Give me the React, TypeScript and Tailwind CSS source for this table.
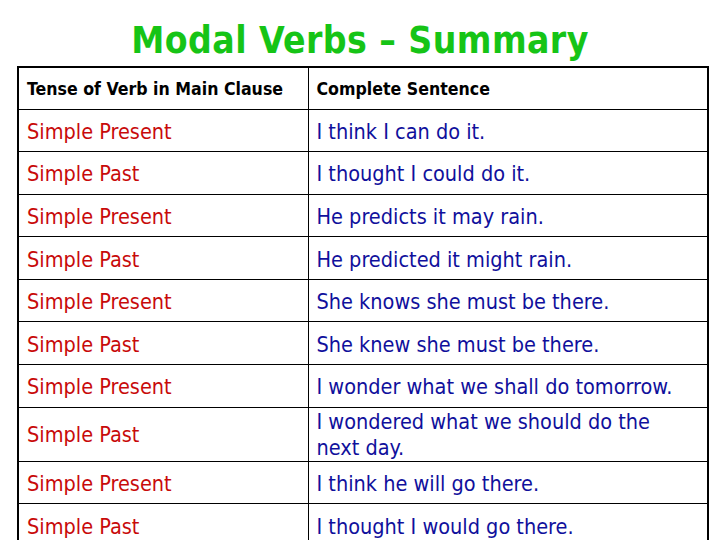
const rows: [string, string][] = [
  ["Simple Present", "I think I can do it."],
  ["Simple Past", "I thought I could do it."],
  ["Simple Present", "He predicts it may rain."],
  ["Simple Past", "He predicted it might rain."],
  ["Simple Present", "She knows she must be there."],
  ["Simple Past", "She knew she must be there."],
  ["Simple Present", "I wonder what we shall do tomorrow."],
  ["Simple Past", "I wondered what we should do the next day."],
  ["Simple Present", "I think he will go there."],
  ["Simple Past", "I thought I would go there."],
];

export default function App() {
  return (
    <div
      className="w-[720px] h-[540px] overflow-hidden bg-white"
      style={{ fontFamily: '"DejaVu Sans Condensed", "DejaVu Sans", sans-serif' }}
    >
      <h1 className="h-[66px] pt-[20px] text-center text-[37px] leading-[42px] font-bold tracking-[0.4px] text-[#16c416]">
        Modal Verbs – Summary
      </h1>
      <table className="ml-[17px] w-[692px] border-collapse border-2 border-black table-fixed">
        <colgroup>
          <col className="w-[290px]" />
          <col />
        </colgroup>
        <thead>
          <tr className="h-[42px]">
            <th className="border border-black pl-[8px] pt-[2px] text-left text-[17.6px] font-bold text-black">
              Tense of Verb in Main Clause
            </th>
            <th className="border border-black pl-[8px] pt-[2px] text-left text-[17.6px] font-bold text-black">
              Complete Sentence
            </th>
          </tr>
        </thead>
        <tbody>
          {rows.map(([tense, sentence], i) => {
            const wrap = i === 7;
            return (
              <tr key={i} className={wrap ? "h-[54px]" : i === 9 ? "h-[44px]" : "h-[42.6px]"}>
                <td
                  className={
                    wrap
                      ? "border border-black pl-[8px] pt-[1px] text-[21.5px] leading-[26px] text-[#c80a0a]"
                      : "border border-black pl-[8px] pt-[3px] text-[21.5px] leading-[26px] text-[#c80a0a]"
                  }
                >
                  {tense}
                </td>
                <td
                  className={
                    wrap
                      ? "border border-black pl-[8px] pr-4 pt-[1px] text-[21.5px] leading-[26px] text-[#10109c]"
                      : "border border-black pl-[8px] pr-4 pt-[3px] text-[21.5px] leading-[26px] text-[#10109c]"
                  }
                >
                  {sentence}
                </td>
              </tr>
            );
          })}
        </tbody>
      </table>
    </div>
  );
}
